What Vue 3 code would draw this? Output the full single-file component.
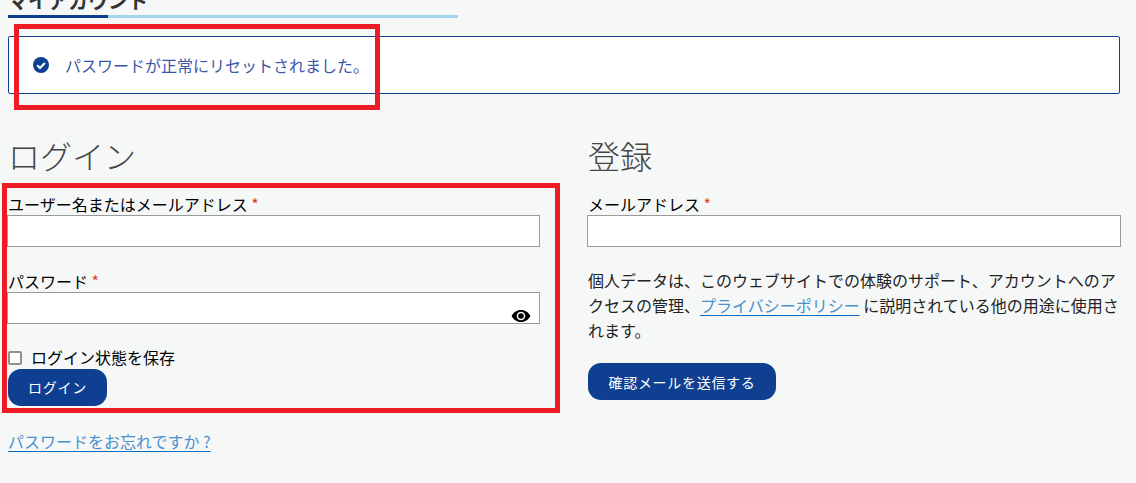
<template>
  <div class="page">
    <header class="title-block">
      <h2 class="page-title">マイアカウント</h2>
      <div class="rule"><span class="rule-strong"></span></div>
    </header>

    <div class="notice">
      <svg class="notice-icon" viewBox="0 0 16 16" aria-hidden="true">
        <circle cx="8" cy="8" r="8" fill="#0f3f91" />
        <path d="M4.2 8.3 7 11l4.9-5" fill="none" stroke="#fff" stroke-width="2.1" />
      </svg>
      <span>パスワードが正常にリセットされました。</span>
    </div>

    <div class="columns">
      <section class="col">
        <h2 class="heading">ログイン</h2>
        <label class="label">ユーザー名またはメールアドレス <b>*</b></label>
        <div class="input"></div>
        <label class="label second">パスワード <b>*</b></label>
        <div class="input">
          <svg class="eye" viewBox="0 0 20 14" aria-hidden="true">
            <path fill-rule="evenodd" d="M10 1C5.6 1 2.2 3.6.6 7c1.6 3.4 5 6 9.4 6s7.800-2.600 9.400-6C17.800 3.600 14.400 1 10 1Zm0 1.700a4.300 4.300 0 1 1 0 8.600 4.300 4.300 0 0 1 0-8.600Z" fill="#000" />
            <circle cx="10" cy="7" r="2.800" fill="#000" />
          </svg>
        </div>
        <div class="remember">
          <span class="check"></span>
          <span>ログイン状態を保存</span>
        </div>
        <button class="btn login" type="button">ログイン</button>
        <a class="link lost">パスワードをお忘れですか ?</a>
      </section>

      <section class="col col-right">
        <h2 class="heading">登録</h2>
        <label class="label">メールアドレス <b>*</b></label>
        <div class="input"></div>
        <p class="privacy">個人データは、このウェブサイトでの体験のサポート、アカウントへのアクセスの管理、<a class="link">プライバシーポリシー</a> に説明されている他の用途に使用されます。</p>
        <button class="btn send" type="button">確認メールを送信する</button>
      </section>
    </div>

    <div class="mark mark-notice"></div>
    <div class="mark mark-form"></div>
  </div>
</template>

<script setup>
</script>

<style>
html, body { margin: 0; background: #f6f8f8; overflow: hidden; }
</style>

<style scoped>
.page {
  position: relative;
  width: 1136px;
  height: 483px;
  overflow: hidden;
  background: #f6f8f8;
  font-family: "Noto Sans CJK JP", "Noto Sans", sans-serif;
  color: #111;
  box-sizing: border-box;
  padding-left: 8px;
}
.title-block { margin-top: -12px; width: 450px; }
.page-title {
  margin: 0;
  height: 27px;
  font-size: 20px;
  line-height: 26px;
  font-weight: 700;
  color: #333;
}
.rule { height: 3px; background: #a5d5ee; }
.rule-strong { display: block; width: 100px; height: 3px; background: #0f3f91; }
.notice {
  display: flex;
  align-items: center;
  box-sizing: border-box;
  width: 1112px;
  height: 58px;
  margin-top: 18px;
  padding-left: 24px;
  background: #fff;
  border: 1px solid #0f3f91;
  border-radius: 2px;
  color: #3c57a6;
  font-size: 16px;
}
.notice-icon { width: 16px; height: 16px; margin-right: 16px; }
.columns {
  display: grid;
  grid-template-columns: 532px 534px;
  column-gap: 47px;
  margin-top: 39px;
}
.col { display: flex; flex-direction: column; align-items: flex-start; }
.col-right { padding-left: 1px; }
.heading {
  margin: 0;
  height: 47px;
  font-size: 32px;
  line-height: 44px;
  font-weight: 300;
  color: #444;
}
.label {
  height: 22px;
  font-size: 16px;
  line-height: 22px;
  font-weight: 400;
  color: #000;
  margin-top: 13px;
}
.label b { color: #e2401c; font-weight: 400; }
.label.second { margin-top: 23px; }
.input {
  position: relative;
  box-sizing: border-box;
  width: 533px;
  height: 32px;
  margin-left: -1px;
  background: #fff;
  border: 1px solid #9a9a9a;
}
.col-right .input { width: 534px; }
.eye {
  position: absolute;
  right: 8px;
  top: 16px;
  width: 20px;
  height: 14px;
}
.remember {
  display: flex;
  align-items: center;
  box-sizing: border-box;
  height: 22px;
  padding-bottom: 2px;
  margin-top: 23px;
  font-size: 16px;
  font-weight: 400;
  color: #000;
}
.check {
  box-sizing: border-box;
  width: 14px;
  height: 14px;
  margin-right: 9px;
  margin-top: 2px;
  background: #fff;
  border: 2px solid #8f8f94;
  border-radius: 2px;
}
.btn {
  display: block;
  padding: 0;
  height: 37px;
  border: 0;
  border-radius: 13px;
  background: #0f3f91;
  color: #fff;
  font-family: inherit;
  font-size: 14px;
  letter-spacing: 0.7px;
}
.login { width: 99px; padding-bottom: 2px; }
.send { width: 188px; margin-top: 20px; }
.link {
  color: #4a90cf;
  text-decoration: underline;
  text-decoration-color: #0a6ebd;
  text-underline-offset: 3px;
}
.lost { margin-top: 23px; font-size: 16px; line-height: 24px; }
.privacy {
  margin: 21px 0 0;
  width: 533px;
  font-size: 16px;
  line-height: 25px;
  color: #222;
}
.mark {
  position: absolute;
  box-sizing: border-box;
  border: 5px solid #ed1c24;
  pointer-events: none;
}
.mark-notice { left: 14px; top: 24px; width: 366px; height: 86px; }
.mark-form { left: 2px; top: 183px; width: 558px; height: 230px; }
</style>
